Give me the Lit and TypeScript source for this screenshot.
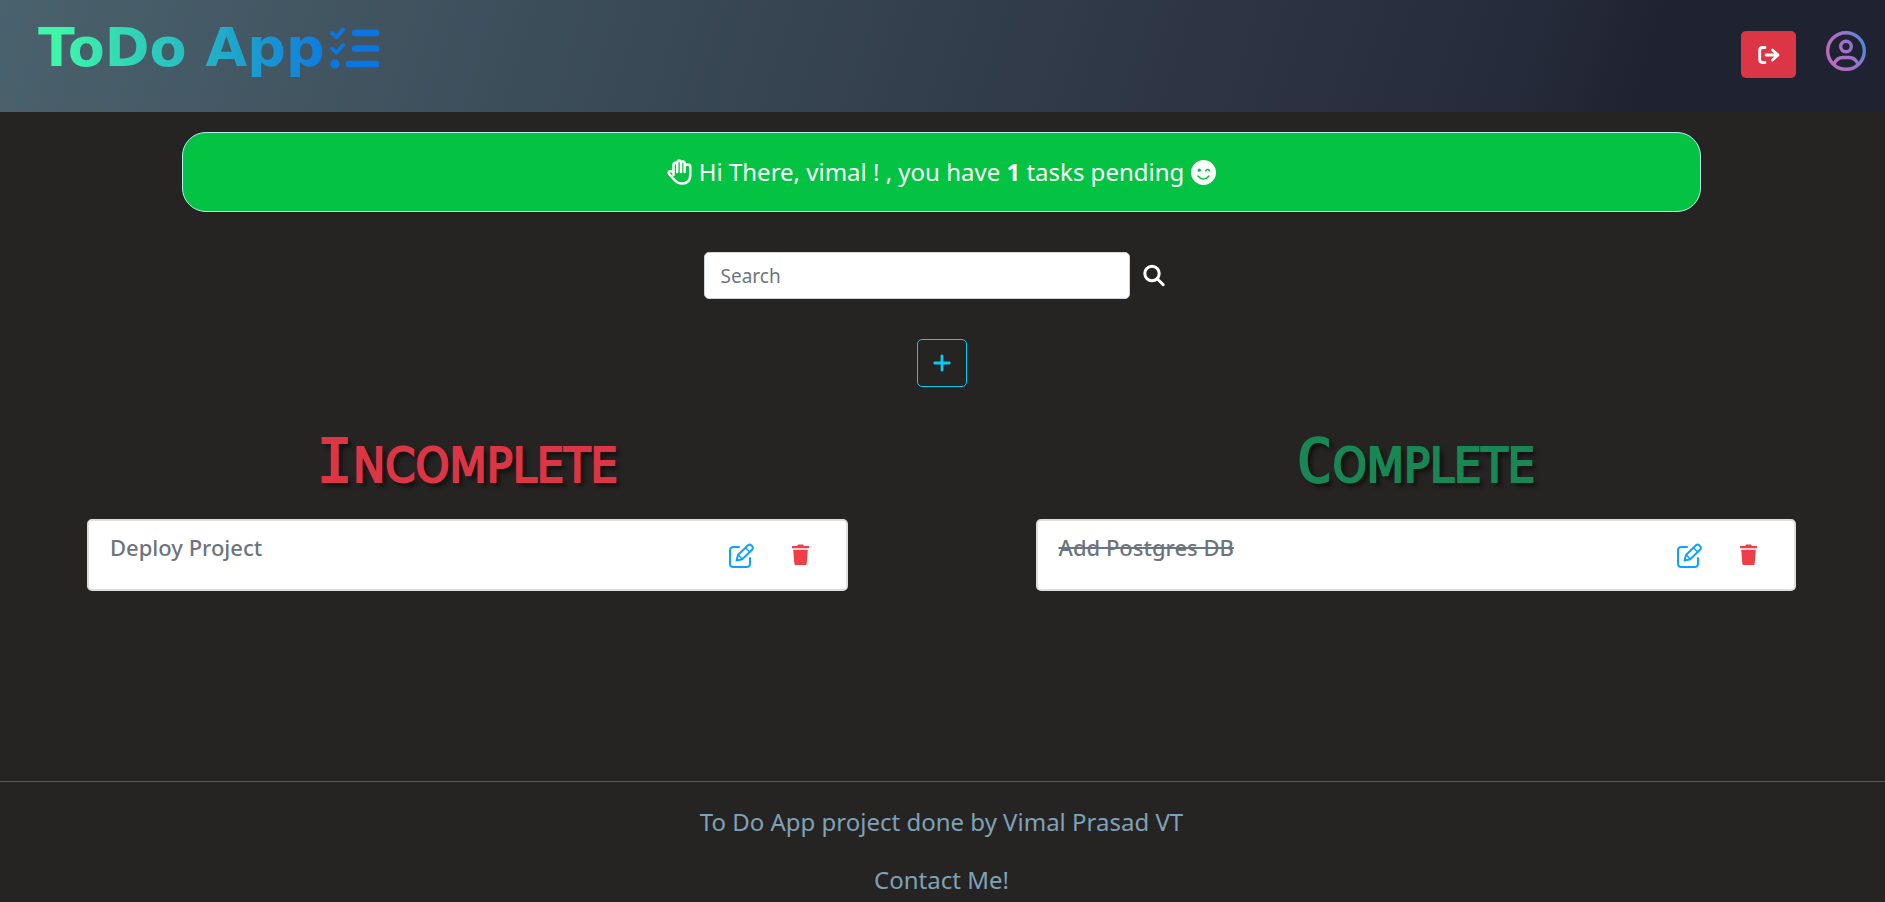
import { LitElement, html, css } from "lit";
import { customElement, property, state } from "lit/decorators.js";
import { classMap } from "lit/directives/class-map.js";

interface Task {
  id: number;
  title: string;
  done: boolean;
}

@customElement("task-card")
class TaskCard extends LitElement {
  @property({ attribute: false }) task!: Task;

  static styles = css`
    :host {
      display: block;
    }
    .card {
      box-sizing: border-box;
      display: flex;
      align-items: flex-start;
      min-height: 72px;
      padding: 11px 36px 0 21px;
      background: #fff;
      border: 2px solid #dedede;
      border-radius: 5px;
    }
    .title {
      flex: 1;
      margin: 0;
      padding-top: 1px;
      font-size: 22px;
      line-height: 28px;
      font-weight: 500;
      color: #6c757d;
    }
    .done {
      text-decoration: line-through;
    }
    .actions {
      display: flex;
      gap: 36px;
      padding-top: 11px;
    }
    button {
      display: flex;
      justify-content: center;
      padding: 0;
      border: 0;
      background: none;
      cursor: pointer;
    }
  `;

  render() {
    return html`
      <article class="card">
        <h2 class=${classMap({ title: true, done: this.task.done })}>${this.task.title}</h2>
        <div class="actions">
          <button aria-label="Edit ${this.task.title}">
            <svg width="27" height="26" viewBox="0 0 27 26" fill="none" stroke="#0da2ff" stroke-width="2" stroke-linecap="round" stroke-linejoin="round">
              <path d="M11 4H5.500Q2 4 2 7.500V20.500Q2 24 5.500 24H18.500Q22 24 22 20.500V15" />
              <path d="M8.500 17.500L10 12L20 2.200Q21.500 1 23.200 2.200L24.200 3.200Q25.500 5 24.200 6.500L14.200 16.200Z" />
              <path d="M17.500 4.800L21.700 9M10.500 12.300L14 15.800" stroke-width="1.500" />
            </svg>
          </button>
          <button aria-label="Delete ${this.task.title}">
            <svg width="19" height="26" viewBox="0 0 19 26" fill="#f03e48">
              <path d="M1 3H6L7 1.600H12L13 3H18V5.200H1Z" />
              <path d="M2.200 6.800H16.800L15.700 20.500Q15.600 22 14.200 22H4.800Q3.400 22 3.300 20.500Z" />
            </svg>
          </button>
        </div>
      </article>
    `;
  }
}

@customElement("app-root")
class AppRoot extends LitElement {
  @state() private tasks: Task[] = [
    { id: 1, title: "Deploy Project", done: false },
    { id: 2, title: "Add Postgres DB", done: true },
  ];

  static styles = css`
    :host {
      display: flex;
      flex-direction: column;
      min-height: 100vh;
      background: #262423;
      color: #fff;
      font-family: "Noto Sans", "Open Sans", sans-serif;
    }
    button {
      display: flex;
      align-items: center;
      justify-content: center;
      padding: 0;
      border: 0;
      background: none;
      color: inherit;
      cursor: pointer;
    }
    .top {
      box-sizing: border-box;
      display: flex;
      align-items: flex-start;
      justify-content: space-between;
      height: 112px;
      padding: 26px 19px 0 38px;
      background: linear-gradient(108deg, #4a626d 0%, #3a4a57 33%, #2c3342 66%, #262b3b 80%, #1f2230 87%);
    }
    .brand {
      display: flex;
      align-items: flex-start;
      gap: 4px;
      text-decoration: none;
    }
    .logo {
      padding-bottom: 14px;
      font-family: "DejaVu Sans", sans-serif;
      font-size: 54px;
      line-height: 44px;
      font-weight: 700;
      background: linear-gradient(90deg, #3ff5a8 8%, #0e7bde 100%);
      background-clip: text;
      -webkit-background-clip: text;
      color: transparent;
    }
    .user {
      display: flex;
      align-items: flex-start;
      gap: 30px;
      padding-top: 5px;
    }
    .logout {
      width: 55px;
      height: 47px;
      border-radius: 5px;
      background: #dc3545;
    }
    main {
      flex: 1;
      padding: 0 2px 40px 0;
    }
    .banner {
      box-sizing: border-box;
      display: flex;
      align-items: center;
      justify-content: center;
      gap: 7px;
      min-height: 80px;
      margin: 20px 182px 0;
      border: 1px solid #b5f0ee;
      border-radius: 24px;
      background: #04c242;
      font-size: 24px;
      line-height: 36px;
    }
    .banner p {
      margin: 0;
    }
    .search {
      display: flex;
      justify-content: center;
      gap: 12px;
      margin-top: 40px;
    }
    .search input {
      box-sizing: border-box;
      width: 426px;
      height: 47px;
      padding: 0 16px;
      border: 1px solid #ced4da;
      border-radius: 5px;
      background: #fff;
      color: #212529;
      font: 19px "Noto Sans", sans-serif;
    }
    .search input::placeholder {
      color: #6c757d;
      opacity: 1;
    }
    .search button {
      justify-content: flex-start;
      width: 38px;
    }
    .add {
      width: 50px;
      height: 48px;
      margin: 40px auto 0;
      border: 1px solid #0dcaf0;
      border-radius: 5px;
      color: #0dcaf0;
    }
    .lists {
      display: grid;
      grid-template-columns: 1fr 1fr;
      gap: 188px;
      margin-top: 40px;
      padding: 0 87px;
    }
    .heading {
      margin: 0 0 20px;
      text-align: center;
      font-family: "DejaVu Sans Condensed", "DejaVu Sans", sans-serif;
      font-size: 48px;
      line-height: 68px;
      font-weight: 400;
      text-transform: uppercase;
      -webkit-text-stroke: 2px currentColor;
      text-shadow: 4px 4px 4px #0f0e0e;
    }
    .heading::first-letter {
      font-family: "DejaVu Sans Mono", monospace;
      font-size: 60px;
    }
    .open {
      color: #dc3545;
    }
    .closed {
      color: #198754;
    }
    footer {
      display: flex;
      flex-direction: column;
      align-items: center;
      gap: 22px;
      padding: 22px 2px 4px 0;
      border-top: 1px solid #5a5858;
      color: #7ea2b8;
      font-size: 24px;
      line-height: 36px;
    }
    footer p {
      margin: 0;
    }
    footer a {
      color: inherit;
      text-decoration: none;
    }
  `;

  private renderList(label: string, done: boolean) {
    return html`
      <section>
        <h1 class=${classMap({ heading: true, open: !done, closed: done })}>${label}</h1>
        ${this.tasks.filter((t) => t.done === done).map((t) => html`<task-card .task=${t}></task-card>`)}
      </section>
    `;
  }

  render() {
    const pending = this.tasks.filter((t) => !t.done).length;
    return html`
      <header class="top">
        <a class="brand" href="#">
          <span class="logo">ToDo App</span>
          <svg width="52" height="44" viewBox="0 0 52 44" fill="none" stroke="#0a76e2" stroke-linecap="round" stroke-linejoin="round">
            <path d="M3 7L7.500 11L14 3.500M3 22.500L7.500 26.500L14 19" stroke-width="4" />
            <path d="M26 7H47M26 22.500H47M20 38H47" stroke-width="6.500" />
            <circle cx="6" cy="38" r="4.700" fill="#0a76e2" stroke="none" />
          </svg>
        </a>
        <div class="user">
          <button class="logout" aria-label="Log out">
            <svg width="22" height="18" viewBox="0 0 22 18" fill="none" stroke="#fff" stroke-width="2.800" stroke-linecap="round" stroke-linejoin="round">
              <path d="M7 1.500H4.500Q1.700 1.500 1.700 4.500V13.500Q1.700 16.500 4.500 16.500H7M8 9H20M14.500 4L20 9L14.500 14" />
            </svg>
          </button>
          <button aria-label="Profile">
            <svg width="40" height="40" viewBox="0 0 40 40" fill="none" stroke="url(#profile)" stroke-width="3.400">
              <defs>
                <linearGradient id="profile" gradientUnits="userSpaceOnUse" x1="8" y1="26" x2="42" y2="14">
                  <stop offset="0" stop-color="#b76cc0" />
                  <stop offset="0.500" stop-color="#9a73cc" />
                  <stop offset="1" stop-color="#3f8fdc" />
                </linearGradient>
              </defs>
              <circle cx="20" cy="20" r="18.300" />
              <circle cx="20" cy="15.500" r="5.300" />
              <path d="M8 33Q11 26.500 17 26.500H23Q29 26.500 32 33" />
            </svg>
          </button>
        </div>
      </header>

      <main>
        <div class="banner">
          <svg width="25" height="26" viewBox="0 0 25 26" fill="none" stroke="#fff" stroke-width="2.500" stroke-linecap="round" stroke-linejoin="round">
            <path d="M6.500 16V6Q6.500 3.800 8.300 3.800T10.200 6V13V4Q10.200 1.600 12.100 1.600T14 4V13V4.800Q14 2.600 15.800 2.600T17.700 4.800V13V7.500Q17.700 5.500 20.500 5.500T23.300 8V16Q23.300 24.500 15 24.500Q10.500 24.500 8 21.500L2.500 15.500Q1 13.500 2.500 12.300T6.500 14" />
          </svg>
          <p>Hi There, vimal ! , you have <b>${pending}</b> tasks pending</p>
          <svg width="25" height="25" viewBox="0 0 25 25" fill="none" stroke="#04c242" stroke-linecap="round">
            <circle cx="12.500" cy="12.500" r="12.500" fill="#fff" stroke="none" />
            <circle cx="8.300" cy="10.200" r="1.600" fill="#04c242" stroke="none" />
            <path d="M14.700 10.700Q16.700 8.300 18.700 10.700M7 16Q9.500 19 12.500 19T18 16" stroke-width="1.500" />
          </svg>
        </div>

        <form class="search" @submit=${(e: Event) => e.preventDefault()}>
          <input type="text" name="search" aria-label="Search" placeholder="Search" />
          <button aria-label="Run search">
            <svg width="24" height="24" viewBox="0 0 24 24" fill="none" stroke="#fff" stroke-width="3" stroke-linecap="round">
              <circle cx="10" cy="9.500" r="7.200" />
              <path d="M15.500 15L21.200 20.700" />
            </svg>
          </button>
        </form>

        <button class="add" aria-label="Add task">
          <svg width="18" height="18" viewBox="0 0 18 18" stroke="currentColor" stroke-width="2.800" stroke-linecap="round">
            <path d="M9 1.800V16.200M1.800 9H16.200" />
          </svg>
        </button>

        <div class="lists">
          ${this.renderList("Incomplete", false)} ${this.renderList("Complete", true)}
        </div>
      </main>

      <footer>
        <p>To Do App project done by Vimal Prasad VT</p>
        <a href="#contact">Contact Me!</a>
      </footer>
    `;
  }
}
